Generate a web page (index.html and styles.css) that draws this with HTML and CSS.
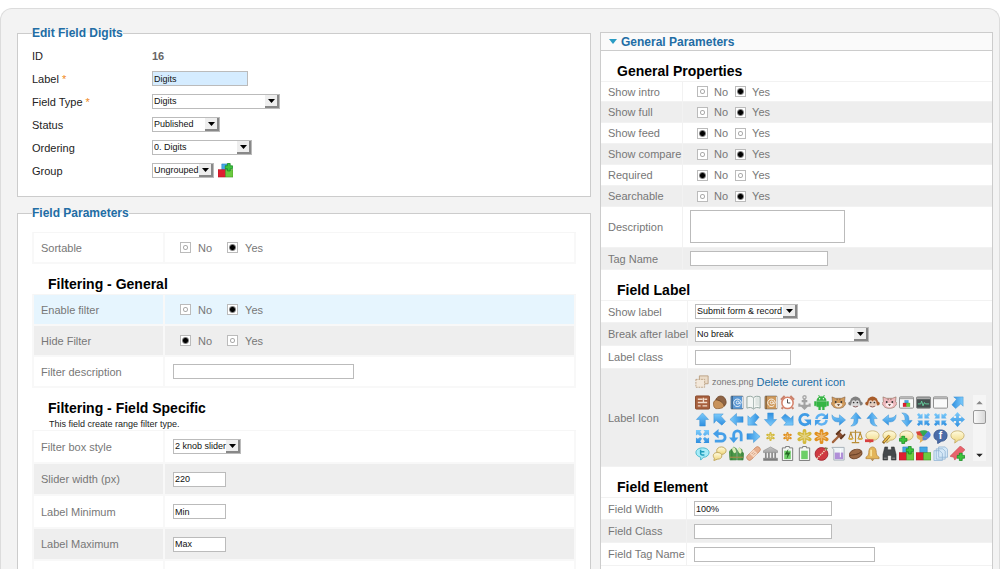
FILE: index.html
```html
<!DOCTYPE html>
<html lang="en">
<head>
    <meta charset="UTF-8">
    <meta name="viewport" content="width=device-width, initial-scale=1.0">
    <title>Edit Field Digits</title>
    <link rel="stylesheet" href="styles.css">
</head>
<body>
    <!-- shared icon shapes -->
    <svg class="sprite" aria-hidden="true">
        <defs>
            <linearGradient id="blue" x1="0" y1="0" x2="0" y2="1">
                <stop offset="0" stop-color="#7ccbfb"/>
                <stop offset="1" stop-color="#2f8fe0"/>
            </linearGradient>
            <linearGradient id="cream" x1="0" y1="0" x2="0" y2="1">
                <stop offset="0" stop-color="#fffbe0"/>
                <stop offset="1" stop-color="#efd67a"/>
            </linearGradient>
            <linearGradient id="metal" x1="0" y1="0" x2="0" y2="1">
                <stop offset="0" stop-color="#c4c4c4"/>
                <stop offset="1" stop-color="#777"/>
            </linearGradient>
        </defs>
        <symbol id="arrow" viewBox="0 0 16 16"><path d="M8 1l6.5 7H11v7H5V8H1.5z" fill="url(#blue)" stroke="#3a8fd2" stroke-width=".5"/></symbol>
        <symbol id="diagonal" viewBox="0 0 16 16"><path d="M2 2h10L9.500 4.500l5 5.500-4 4-6-5L2 12z" fill="url(#blue)" stroke="#3a8fd2" stroke-width=".5"/></symbol>
        <symbol id="curve" viewBox="0 0 16 16"><path d="M1 3c2 3 4 3.500 8 3.500V3l6.500 5.500L9 14v-3.500C4 11 1 9 1 3z" fill="url(#blue)" stroke="#3a8fd2" stroke-width=".5"/></symbol>
        <symbol id="circle-arrow" viewBox="0 0 16 16"><path d="M12.500 4.500A5.500 5.500 0 1 0 13 11" fill="none" stroke="#3f9ce6" stroke-width="3"/><path d="M7.500 8H15v6.500z" fill="#3f9ce6"/></symbol>
        <symbol id="refresh" viewBox="0 0 16 16"><path d="M2.500 7.500a5.500 5.500 0 0 1 9.500-3M13.500 8.500a5.500 5.500 0 0 1-9.500 3" fill="none" stroke="#5fb2f2" stroke-width="2.600"/><path d="M15 1v6.500H8.500zM1 15V8.500h6.500z" fill="#459fe8"/></symbol>
        <symbol id="undo" viewBox="0 0 16 16"><path d="M5 5h5a4 4 0 0 1 0 8H3" fill="none" stroke="#459fe8" stroke-width="3"/><path d="M7 0v10L1 5z" fill="#459fe8"/></symbol>
        <symbol id="outward" viewBox="0 0 16 16"><path d="M1 1h6L5.500 3l2 2.500-2 2L3 5.500 1 7zM15 1v6l-2-1.500-2.500 2-2-2L10.500 3 9 1zM1 15V9l2 1.500 2.500-2 2 2L5.500 13 7 15zM15 15H9l1.500-2-2-2.500 2-2 2.500 2L15 9z" fill="url(#blue)"/></symbol>
        <symbol id="inward" viewBox="0 0 16 16"><path d="M7 7H1.500L3 5 1 3l2-2 2 2 2-1.500zM9 7V1.500L11 3l2-2 2 2-2 2 1.500 2zM7 9v5.500L5 13l-2 2-2-2 2-2-1.500-2zM9 9h5.500L13 11l2 2-2 2-2-2-2 1.500z" fill="url(#blue)"/></symbol>
        <symbol id="move" viewBox="0 0 16 16"><path d="M8 0l3.500 4H9.500v2.500H12V4.500L16 8l-4 3.500V9.500H9.500V12h2L8 16l-3.500-4h2V9.500H4v2L0 8l4-3.500v2h2.500V4h-2z" fill="url(#blue)"/></symbol>
        <symbol id="asterisk" viewBox="0 0 16 16"><path d="M8 2v12M2.500 5l11 6M13.500 5l-11 6" stroke="currentColor" stroke-width="4" stroke-linecap="round"/><path d="M8 3v10M3.500 5.500l9 5M12.500 5.500l-9 5" stroke="#fff" stroke-opacity=".35" stroke-width="1.500"/></symbol>
        <symbol id="board" viewBox="0 0 16 16"><rect x=".5" y="1" width="15" height="14" rx="1" fill="#a8603e" stroke="#85482a"/><path d="M3 4.500h5M10 4.500h3M3 8h10M3 11.500h3M8 11.500h5M9 3v5" stroke="#f2dccb" stroke-width="1.400"/></symbol>
        <symbol id="acorn" viewBox="0 0 16 16"><path d="M2 7c-1 4 0 8 4 7.500 4 0 7-1 7-4L6 4z" fill="#c8935c" stroke="#8b5a2b" stroke-width=".8"/><path d="M4 5c2-5 8-5 10-1s1 6-1 8C13 8 9 6 4 5z" fill="#8e6344" stroke="#6c4426" stroke-width=".8"/></symbol>
        <symbol id="address-book" viewBox="0 0 16 16"><rect x="2" y="1" width="13" height="14" rx="1" fill="currentColor" stroke="#555" stroke-opacity=".5"/><path d="M3.500 1v14" stroke="#000" stroke-opacity=".3" stroke-width="1.500"/><path d="M14.500 2v12" stroke="#eee"/><path d="M12 11a4 4 0 1 1 1-3c0 2-2 2-2 0" fill="none" stroke="#fff" stroke-width=".9"/><circle cx="9.300" cy="8" r="1.600" fill="none" stroke="#fff" stroke-width=".9"/></symbol>
        <symbol id="open-book" viewBox="0 0 16 16"><path d="M1 2c3-1 5-1 7 1 2-2 4-2 7-1v12c-3-1-5-1-7 1-2-2-4-2-7-1z" fill="#f3f6f4" stroke="#8fa29d"/><path d="M8 3v12" stroke="#aab8b4"/><path d="M10 3c1-1 3-1 4 0v9c-1-1-3-1-4 0z" fill="#dfe6e3"/></symbol>
        <symbol id="clock" viewBox="0 0 16 16"><path d="M1 5l4-4M15 5l-4-4M3 13l-1 2M13 13l1 2" stroke="#c9826c" stroke-width="2.200"/><circle cx="8" cy="8.500" r="6" fill="#fff" stroke="#d5826a" stroke-width="1.600"/><path d="M8 4.500v4h3" fill="none" stroke="#444"/></symbol>
        <symbol id="anchor" viewBox="0 0 16 16"><circle cx="8" cy="2.500" r="1.700" fill="none" stroke="#aaa" stroke-width="1.500"/><path d="M8 4v10M5 6.500h6M2.500 9v2.500h11V9M5 11.500l3 3 3-3" fill="none" stroke="#a2a2a2" stroke-width="2.200"/></symbol>
        <symbol id="android" viewBox="0 0 16 16"><path d="M3 6a5 4.500 0 0 1 10 0zM3 7h10v5.500H3zM.500 7h2v4.500h-2zM13.500 7h2v4.500h-2zM5 12h2v4H5zM9 12h2v4H9z" fill="#35b544" stroke="#35b544" stroke-width=".5"/><path d="M5 0l1 2.500M11 0l-1 2.500" stroke="#35b544"/><circle cx="6" cy="4" r=".7" fill="#fff"/><circle cx="10" cy="4" r=".7" fill="#fff"/></symbol>
        <symbol id="cat" viewBox="0 0 16 16"><path d="M1 2l4 1.500h6L15 2l-.5 5L16 9l-2 3c-2 3-10 3-12 0L0 9l1.500-2z" fill="currentColor" stroke="#6b4a30" stroke-opacity=".6" stroke-width=".8"/><path d="M4 10c1-2 7-2 8 0 0 4-8 4-8 0z" fill="#fff" fill-opacity=".75"/><circle cx="5" cy="7.500" r="1" fill="#333"/><circle cx="11" cy="7.500" r="1" fill="#333"/><path d="M7 10h2l-1 1.500zM6.500 4v1.500M9.500 4v1.500" fill="#444" stroke="#5a3d2a" stroke-opacity=".7"/></symbol>
        <symbol id="monkey" viewBox="0 0 16 16"><circle cx="2.500" cy="9" r="2.200" fill="currentColor"/><circle cx="13.500" cy="9" r="2.200" fill="currentColor"/><circle cx="8" cy="7.500" r="5.800" fill="currentColor"/><path d="M4 7c1-2 3-2 4 0 1-2 3-2 4 0 0 2 1 3 1 4-1 5-9 5-10 0 0-1 1-2 1-4z" fill="#fff" fill-opacity=".7"/><circle cx="6" cy="8" r=".9" fill="#333"/><circle cx="10" cy="8" r=".9" fill="#333"/><path d="M5.500 12q2.500 1.500 5 0" fill="none" stroke="#855"/></symbol>
        <symbol id="window" viewBox="0 0 16 16"><rect x=".5" y="2" width="15" height="12" rx="1" fill="#fafafa" stroke="#888"/><path d="M1 3.500h14" stroke="#aaa" stroke-width="2"/></symbol>
        <symbol id="monitor" viewBox="0 0 16 16"><rect x=".5" y="2" width="15" height="12" rx="1" fill="#445050" stroke="#888"/><path d="M1 3.500h14" stroke="#aaa" stroke-width="2"/><path d="M2 9.500h3l1-3 1.500 5L9 8l1 1.500h4" fill="none" stroke="#65d2a0"/></symbol>
        <symbol id="gavel" viewBox="0 0 16 16"><path d="M2 14l7-7" stroke="#a2633c" stroke-width="2.400" stroke-linecap="round"/><path d="M6.500 3.500l6 6" stroke="#8c4f31" stroke-width="4.500"/><path d="M5.500 6l5-5M10 10.500l5-5" stroke="#5f3820" stroke-width="1.800"/></symbol>
        <symbol id="scales" viewBox="0 0 16 16"><path d="M8 1v13M4 14.500h8M2 3.500h12M3 4l-2 6M3 4l2 6M13 4l-2 6M13 4l2 6" fill="none" stroke="#b98d35" stroke-width="1.200"/><path d="M0 9.500h6c0 3-6 3-6 0zM10 9.500h6c0 3-6 3-6 0z" fill="#d9b04c"/></symbol>
        <symbol id="balloon" viewBox="0 0 16 16"><path d="M8 2c4 0 7 2 7 5s-3 5-6 5l-4 3 .500-3.500C3 11 1 9.500 1 7c0-3 3-5 7-5z" fill="url(#cream)" stroke="#bfa55c" stroke-width=".8"/></symbol>
        <symbol id="plus"><path d="M3 .500h3v2.500h2.500v3H6v2.500H3V6H.500V3H3z" fill="#3cc43c" stroke="#168a20" stroke-width=".8"/></symbol>
        <symbol id="buzz" viewBox="0 0 16 16"><path d="M0 3l5-1 4 6H2z" fill="#d8463b"/><path d="M4 2c3-1 7-1 9 1L8 9z" fill="#34a853"/><path d="M13 2c4 3 3 6 0 8L7 9z" fill="#4e7fe0"/><path d="M1 6l7 2 5 2c-2 2-4 2-5 2l-4 3 .500-3.500C2 11 0 9 1 6z" fill="#e0b05a"/><path d="M7 8l6 2c-2 2-4 2-6 2z" fill="#5b82d0"/></symbol>
        <symbol id="facebook" viewBox="0 0 16 16"><path d="M8 1c4 0 7 2 7 6s-3 6-6 6l-4 2.500V12C3 12 1 10 1 7c0-4 3-6 7-6z" fill="#4b6ca9" stroke="#3a598f"/></symbol>
        <symbol id="twitter" viewBox="0 0 16 16"><path d="M8 2c4 0 7 2 7 5s-3 5-6 5l-3 3v-3C3 11 1 9.500 1 7c0-3 3-5 7-5z" fill="#a8ecf8" stroke="#43b5cc"/><path d="M6 4v4q0 1.500 1.500 1.500H10M6 6h4" fill="none" stroke="#1e9dbc" stroke-width="1.600"/></symbol>
        <symbol id="balloons" viewBox="0 0 16 16"><ellipse cx="10" cy="5" rx="5" ry="4" fill="url(#cream)" stroke="#bfa55c"/><path d="M5.500 7c3 0 5 1 5 3.500S8.500 14 6 14l-4 1.500.500-2.500C.500 11 1 7 5.500 7z" fill="url(#cream)" stroke="#bfa55c"/></symbol>
        <symbol id="bamboo" viewBox="0 0 16 16"><path d="M0 6l3-3v12H1zM3 4l2-3 3 2v12H3zM9 5l2-3 3 2v11H9zM14 6l2 2-1 7h-1z" fill="#4d9a49" stroke="#35753a" stroke-width=".5"/><ellipse cx="5.500" cy="4.500" rx="1.800" ry="3.200" fill="#dcedb9" transform="rotate(-20 5.500 4.500)"/><ellipse cx="11.500" cy="5" rx="1.800" ry="3.200" fill="#dcedb9" transform="rotate(-20 11.500 5)"/><path d="M1 12h14" stroke="#a98a4a" stroke-width="1.200"/></symbol>
        <symbol id="bandage" viewBox="0 0 16 16"><g transform="rotate(-45 8 8)"><rect x="-1" y="5" width="18" height="6" rx="3" fill="#e7ad8b" stroke="#c88a66" stroke-width=".8"/><rect x="5" y="5" width="6" height="6" fill="#f7d8c2"/><path d="M6.500 7h1M8.500 9h1M8.500 7h1M6.500 9h1" stroke="#c07a52"/></g></symbol>
        <symbol id="bank" viewBox="0 0 16 16"><path d="M8 1l7.500 4v2H.500V5zM.500 13h15v2.500H.500z" fill="url(#metal)" stroke="#777" stroke-width=".5"/><path d="M3 7v6M6.300 7v6M9.700 7v6M13 7v6" stroke="#888" stroke-width="1.800"/></symbol>
        <symbol id="battery" viewBox="0 0 16 16"><path d="M6 .500h4V2h3.500v13.500h-11V2H6z" fill="#f4f7f4" stroke="#777"/><path d="M4.500 5h7v9h-7z" fill="currentColor"/></symbol>
        <symbol id="ball" viewBox="0 0 16 16"><circle cx="8" cy="8.500" r="6.800" fill="#cf3a42" stroke="#a32830"/><path d="M3 13.500l10-10" stroke="#f0dcc0" stroke-width="1.500" stroke-dasharray="1.500 1"/><path d="M11 1l4 1-2 3z" fill="#7a7a4a"/></symbol>
        <symbol id="beaker" viewBox="0 0 16 16"><path d="M1 1.500h13V15H3V4z" fill="#eef4f7" stroke="#a5b0b8"/><path d="M4 7h9v7H4z" fill="#b08fd8"/><path d="M10 3v9" stroke="#fff"/></symbol>
        <symbol id="bean" viewBox="0 0 16 16"><ellipse cx="8" cy="8.500" rx="7" ry="4.800" transform="rotate(-20 8 8)" fill="#9c6945" stroke="#74482b"/><path d="M2 10c4-1 8 0 12-4" fill="none" stroke="#5d371f"/></symbol>
        <symbol id="bell" viewBox="0 0 16 16"><path d="M8 1c3 0 4 3 4 6 0 2 1 4 3 5v1.500H1V12c2-1 3-3 3-5 0-3 1-6 4-6z" fill="#e3b559" stroke="#b5853d" stroke-width=".8"/><path d="M6 14h4l-2 2z" fill="#a8742a"/><path d="M6.500 4v7" stroke="#fff0b0" stroke-width="1.500"/></symbol>
        <symbol id="binoculars" viewBox="0 0 16 16"><path d="M3 1h3v3h4V1h3l2 8v6h-5v-5H6v5H1V9z" fill="#44484c" stroke="#222" stroke-width=".5"/><path d="M2 13h3M11 13h3" stroke="#999"/></symbol>
        <symbol id="blocks" viewBox="0 0 16 16"><path d="M4 1h8v7H4z" fill="#46a8e6" stroke="#2273b6" stroke-width=".5"/><path d="M0 7h8v8H0z" fill="#de1f30" stroke="#a81420" stroke-width=".5"/><path d="M8 7h8v8H8z" fill="#6ccb40" stroke="#388218" stroke-width=".5"/></symbol>
        <symbol id="documents" viewBox="0 0 16 16"><path d="M6 1h7l2.500 2.500V12H6zM3.500 3h7L13 5.500V14H3.500zM1 5h6l3 3v7.500H1z" fill="#d5e8f7" stroke="#8fb3d3" stroke-width=".8"/></symbol>
        <symbol id="bookmark" viewBox="0 0 16 16"><path d="M11 0l5 4L5 15l-1-3-4-1z" fill="#e8636c" stroke="#c4434f" stroke-width=".6"/></symbol>
        <symbol id="zones" viewBox="0 0 16 16"><path d="M5 1h10v9H5z" fill="#eadbc8" stroke="#b79c7d"/><path d="M1 5h10v9H1z" fill="#f3e8da" stroke="#b79c7d" stroke-dasharray="2 1"/></symbol>
    </svg>

    <form class="panel">
        <div class="column">
            <fieldset>
                <legend>Edit Field Digits</legend>
                <table class="details">
                    <tr><th>ID</th><td><strong class="field-id">16</strong></td></tr>
                    <tr><th><label for="label">Label <span class="star">*</span></label></th><td><input type="text" id="label" class="w-96 highlight" value="Digits"></td></tr>
                    <tr><th><label for="type">Field Type <span class="star">*</span></label></th><td><select id="type" class="w-128"><option>Digits</option></select></td></tr>
                    <tr><th><label for="status">Status</label></th><td><select id="status" class="w-68"><option>Published</option></select></td></tr>
                    <tr><th><label for="ordering">Ordering</label></th><td><select id="ordering" class="w-100"><option>0. Digits</option></select></td></tr>
                    <tr>
                        <th><label for="group">Group</label></th>
                        <td class="group-cell">
                            <select id="group" class="w-62"><option>Ungrouped</option></select>
                            <button type="button" class="icon" aria-label="Add group"><svg viewBox="0 0 16 16"><use href="#blocks"/><use href="#plus" x="7"/></svg></button>
                        </td>
                    </tr>
                </table>
            </fieldset>

            <fieldset>
                <legend>Field Parameters</legend>
                <table class="params first">
                    <tr>
                        <th>Sortable</th>
                        <td><div class="choices"><label><input type="radio" name="sortable">No</label><label><input type="radio" name="sortable" checked>Yes</label></div></td>
                    </tr>
                </table>
                <h3>Filtering - General</h3>
                <table class="params">
                    <tr class="active">
                        <th>Enable filter</th>
                        <td><div class="choices"><label><input type="radio" name="enable">No</label><label><input type="radio" name="enable" checked>Yes</label></div></td>
                    </tr>
                    <tr class="alt">
                        <th>Hide Filter</th>
                        <td><div class="choices"><label><input type="radio" name="hide" checked>No</label><label><input type="radio" name="hide">Yes</label></div></td>
                    </tr>
                    <tr><th><label for="filter-desc">Filter description</label></th><td><input type="text" id="filter-desc" class="w-181"></td></tr>
                </table>
                <h3>Filtering - Field Specific</h3>
                <p class="note">This field create range filter type.</p>
                <table class="params tall">
                    <tr><th><label for="box-style">Filter box style</label></th><td><select id="box-style" class="w-68"><option>2 knob slider</option></select></td></tr>
                    <tr class="alt"><th><label for="slider-width">Slider width (px)</label></th><td><input type="text" id="slider-width" class="w-53" value="220"></td></tr>
                    <tr><th><label for="min">Label Minimum</label></th><td><input type="text" id="min" class="w-53" value="Min"></td></tr>
                    <tr class="alt"><th><label for="max">Label Maximum</label></th><td><input type="text" id="max" class="w-53" value="Max"></td></tr>
                    <tr><th></th><td></td></tr>
                </table>
            </fieldset>
        </div>

        <div class="general">
            <h2>General Parameters</h2>
            <h3>General Properties</h3>
            <table class="props properties">
                <tr>
                    <th>Show intro</th>
                    <td><div class="choices"><label><input type="radio" name="intro">No</label><label><input type="radio" name="intro" checked>Yes</label></div></td>
                </tr>
                <tr class="alt">
                    <th>Show full</th>
                    <td><div class="choices"><label><input type="radio" name="full">No</label><label><input type="radio" name="full" checked>Yes</label></div></td>
                </tr>
                <tr>
                    <th>Show feed</th>
                    <td><div class="choices"><label><input type="radio" name="feed" checked>No</label><label><input type="radio" name="feed">Yes</label></div></td>
                </tr>
                <tr class="alt">
                    <th>Show compare</th>
                    <td><div class="choices"><label><input type="radio" name="compare">No</label><label><input type="radio" name="compare" checked>Yes</label></div></td>
                </tr>
                <tr>
                    <th>Required</th>
                    <td><div class="choices"><label><input type="radio" name="required" checked>No</label><label><input type="radio" name="required">Yes</label></div></td>
                </tr>
                <tr class="alt">
                    <th>Searchable</th>
                    <td><div class="choices"><label><input type="radio" name="searchable">No</label><label><input type="radio" name="searchable" checked>Yes</label></div></td>
                </tr>
                <tr><th><label for="description">Description</label></th><td><textarea id="description"></textarea></td></tr>
                <tr class="alt"><th><label for="tag-name">Tag Name</label></th><td><input type="text" id="tag-name" class="w-138"></td></tr>
            </table>

            <h3>Field Label</h3>
            <table class="props wide">
                <tr><th><label for="show-label">Show label</label></th><td><select id="show-label" class="w-103"><option>Submit form &amp; record</option></select></td></tr>
                <tr class="alt"><th><label for="break">Break after label</label></th><td><select id="break" class="w-174"><option>No break</option></select></td></tr>
                <tr><th><label for="label-class">Label class</label></th><td><input type="text" id="label-class" class="w-96"></td></tr>
                <tr class="alt">
                    <th>Label Icon</th>
                    <td>
                        <div class="current-icon">
                            <svg viewBox="0 0 16 16"><use href="#zones"/></svg>
                            <span>zones.png</span>
                            <a href="#">Delete curent icon</a>
                        </div>
                        <div class="picker">
                            <div class="icons">
                                <button type="button" class="icon" aria-label="Board"><svg><use href="#board"/></svg></button>
                                <button type="button" class="icon" aria-label="Acorn"><svg><use href="#acorn"/></svg></button>
                                <button type="button" class="icon sky" aria-label="Blue address book"><svg><use href="#address-book"/></svg></button>
                                <button type="button" class="icon" aria-label="Open book"><svg><use href="#open-book"/></svg></button>
                                <button type="button" class="icon tan" aria-label="Address book"><svg><use href="#address-book"/></svg></button>
                                <button type="button" class="icon" aria-label="Alarm clock"><svg><use href="#clock"/></svg></button>
                                <button type="button" class="icon" aria-label="Anchor"><svg><use href="#anchor"/></svg></button>
                                <button type="button" class="icon" aria-label="Android"><svg><use href="#android"/></svg></button>
                                <button type="button" class="icon tan" aria-label="Tiger"><svg><use href="#cat"/></svg></button>
                                <button type="button" class="icon grey" aria-label="Grey monkey"><svg><use href="#monkey"/></svg></button>
                                <button type="button" class="icon brown" aria-label="Monkey"><svg><use href="#monkey"/></svg></button>
                                <button type="button" class="icon pink" aria-label="Cat"><svg><use href="#cat"/></svg></button>
                                <button type="button" class="icon" aria-label="Window blocks"><svg viewBox="0 0 16 16"><use href="#window"/><use href="#blocks" x="4" y="5" width="8" height="8"/></svg></button>
                                <button type="button" class="icon" aria-label="Monitor"><svg><use href="#monitor"/></svg></button>
                                <button type="button" class="icon" aria-label="Window"><svg><use href="#window"/></svg></button>
                                <button type="button" class="icon r90" aria-label="Arrow up right"><svg><use href="#diagonal"/></svg></button>

                                <button type="button" class="icon" aria-label="Arrow up"><svg><use href="#arrow"/></svg></button>
                                <button type="button" class="icon" aria-label="Arrow up left"><svg><use href="#diagonal"/></svg></button>
                                <button type="button" class="icon r270" aria-label="Arrow left"><svg><use href="#arrow"/></svg></button>
                                <button type="button" class="icon r270" aria-label="Arrow down left"><svg><use href="#diagonal"/></svg></button>
                                <button type="button" class="icon r180" aria-label="Arrow down"><svg><use href="#arrow"/></svg></button>
                                <button type="button" class="icon r180" aria-label="Arrow down right"><svg><use href="#diagonal"/></svg></button>
                                <button type="button" class="icon" aria-label="Circle arrow"><svg><use href="#circle-arrow"/></svg></button>
                                <button type="button" class="icon" aria-label="Refresh"><svg><use href="#refresh"/></svg></button>
                                <button type="button" class="icon" aria-label="Curve right"><svg><use href="#curve"/></svg></button>
                                <button type="button" class="icon r270" aria-label="Curve up"><svg><use href="#curve"/></svg></button>
                                <button type="button" class="icon mirror270" aria-label="Curve up left"><svg><use href="#curve"/></svg></button>
                                <button type="button" class="icon mirror" aria-label="Curve left"><svg><use href="#curve"/></svg></button>
                                <button type="button" class="icon mirror90" aria-label="Curve down"><svg><use href="#curve"/></svg></button>
                                <button type="button" class="icon" aria-label="Arrows in"><svg><use href="#inward"/></svg></button>
                                <button type="button" class="icon" aria-label="Arrows inward"><svg><use href="#inward"/></svg></button>
                                <button type="button" class="icon" aria-label="Move"><svg><use href="#move"/></svg></button>

                                <button type="button" class="icon" aria-label="Arrows out"><svg><use href="#outward"/></svg></button>
                                <button type="button" class="icon" aria-label="Return"><svg><use href="#undo"/></svg></button>
                                <button type="button" class="icon r270" aria-label="Turn down"><svg><use href="#undo"/></svg></button>
                                <button type="button" class="icon r90" aria-label="Arrow right"><svg><use href="#arrow"/></svg></button>
                                <button type="button" class="icon yellow small" aria-label="Small yellow asterisk"><svg><use href="#asterisk"/></svg></button>
                                <button type="button" class="icon orange small" aria-label="Small orange asterisk"><svg><use href="#asterisk"/></svg></button>
                                <button type="button" class="icon yellow" aria-label="Yellow asterisk"><svg><use href="#asterisk"/></svg></button>
                                <button type="button" class="icon orange" aria-label="Orange asterisk"><svg><use href="#asterisk"/></svg></button>
                                <button type="button" class="icon" aria-label="Gavel"><svg><use href="#gavel"/></svg></button>
                                <button type="button" class="icon" aria-label="Scales"><svg><use href="#scales"/></svg></button>
                                <button type="button" class="icon" aria-label="Balloon minus"><svg viewBox="0 0 16 16"><use href="#balloon"/><path d="M0 11h9v3H0z" fill="#d84040"/></svg></button>
                                <button type="button" class="icon" aria-label="Balloon pencil"><svg viewBox="0 0 16 16"><use href="#balloon"/><path d="M1 15l7-8" stroke="#8b6325" stroke-width="3"/><path d="M2 14l6-7" stroke="#f3c64c" stroke-width="1.5"/></svg></button>
                                <button type="button" class="icon" aria-label="Balloon plus"><svg viewBox="0 0 16 16"><use href="#balloon"/><use href="#plus" y="7"/></svg></button>
                                <button type="button" class="icon" aria-label="Buzz"><svg><use href="#buzz"/></svg></button>
                                <button type="button" class="icon" aria-label="Facebook balloon"><svg viewBox="0 0 16 16"><use href="#facebook"/><text x="8" y="11" class="letter">f</text></svg></button>
                                <button type="button" class="icon" aria-label="Balloon"><svg><use href="#balloon"/></svg></button>

                                <button type="button" class="icon" aria-label="Twitter balloon"><svg><use href="#twitter"/></svg></button>
                                <button type="button" class="icon" aria-label="Balloons"><svg><use href="#balloons"/></svg></button>
                                <button type="button" class="icon" aria-label="Bamboo"><svg><use href="#bamboo"/></svg></button>
                                <button type="button" class="icon" aria-label="Bandage"><svg><use href="#bandage"/></svg></button>
                                <button type="button" class="icon" aria-label="Bank"><svg><use href="#bank"/></svg></button>
                                <button type="button" class="icon green" aria-label="Battery charging"><svg viewBox="0 0 16 16"><use href="#battery"/><path d="M9 3L5 9h3l-1 5 4-7H8z" fill="#226622"/></svg></button>
                                <button type="button" class="icon green" aria-label="Battery"><svg><use href="#battery"/></svg></button>
                                <button type="button" class="icon" aria-label="Ball"><svg><use href="#ball"/></svg></button>
                                <button type="button" class="icon" aria-label="Beaker"><svg><use href="#beaker"/></svg></button>
                                <button type="button" class="icon" aria-label="Bean"><svg><use href="#bean"/></svg></button>
                                <button type="button" class="icon" aria-label="Bell"><svg><use href="#bell"/></svg></button>
                                <button type="button" class="icon" aria-label="Binoculars"><svg><use href="#binoculars"/></svg></button>
                                <button type="button" class="icon" aria-label="Blocks plus"><svg viewBox="0 0 16 16"><use href="#blocks"/><use href="#plus" x="7"/></svg></button>
                                <button type="button" class="icon" aria-label="Blocks"><svg><use href="#blocks"/></svg></button>
                                <button type="button" class="icon" aria-label="Documents"><svg><use href="#documents"/></svg></button>
                                <button type="button" class="icon" aria-label="Bookmark plus"><svg viewBox="0 0 16 16"><use href="#bookmark"/><use href="#plus" x="7" y="7"/></svg></button>
                            </div>
                            <div class="scroller" aria-hidden="true">
                                <svg viewBox="0 0 12 8"><path d="M3 6l3-3 3 3z" fill="#888"/></svg>
                                <div class="thumb"></div>
                                <svg viewBox="0 0 12 8"><path d="M3 2l3 3 3-3z" fill="#222"/></svg>
                            </div>
                        </div>
                    </td>
                </tr>
            </table>

            <h3>Field Element</h3>
            <table class="props element">
                <tr><th><label for="field-width">Field Width</label></th><td><input type="text" id="field-width" class="w-138" value="100%"></td></tr>
                <tr class="alt"><th><label for="field-class">Field Class</label></th><td><input type="text" id="field-class" class="w-138"></td></tr>
                <tr><th><label for="field-tag">Field Tag Name</label></th><td><input type="text" id="field-tag" class="w-181"></td></tr>
            </table>
        </div>
    </form>
</body>
</html>
```
FILE: styles.css
```css
* {
    box-sizing: border-box;
}

body {
    margin: 0;
    padding-top: 8px;
    font-family: "Liberation Sans", Arial, sans-serif;
    font-size: 11px;
    color: #777;
    background: #fff;
}

.sprite {
    position: absolute;
    width: 0;
    height: 0;
}

.panel {
    display: grid;
    grid-template-columns: minmax(0, 574fr) minmax(0, 393fr);
    gap: 9px;
    min-height: calc(100vh - 8px);
    padding: 16px 6px 0 16px;
    background: #f3f3f3;
    border: 1px solid #dcdcdc;
    border-bottom: none;
    border-radius: 12px 12px 0 0;
}

.column {
    display: flex;
    flex-direction: column;
    gap: 8px;
}

fieldset {
    min-width: 0;
    margin: 0;
    padding: 0 14px 14px;
    background: #fff;
    border: 1px solid #ccc;
}

legend {
    padding: 0;
    font-size: 12px;
    line-height: 16px;
    font-weight: bold;
    color: #226da5;
}

h2 {
    display: flex;
    align-items: center;
    gap: 4px;
    height: 18px;
    margin: 0;
    padding-left: 8px;
    font-size: 12px;
    color: #226da5;
    background: #fafafa;
    border-bottom: 1px solid #ccc;
}

h2::before {
    content: "";
    border: 4px solid transparent;
    border-top: 5px solid #2a9cc4;
    border-bottom: none;
}

h3 {
    margin: 0;
    padding: 10px 16px 0;
    font-size: 14px;
    line-height: 20px;
    color: #000;
}

.note {
    margin: 0;
    padding-left: 17px;
    font-size: 9px;
    line-height: 12px;
    color: #222;
}

table {
    width: 100%;
    table-layout: fixed;
    border-spacing: 0;
}

th {
    text-align: left;
    font-weight: normal;
    white-space: nowrap;
}

td,
th {
    padding-top: 0;
    padding-bottom: 0;
    vertical-align: middle;
}

/* field details */
.details {
    margin-top: 3px;
}

.details th,
.details td {
    height: 23px;
    padding-left: 0;
    color: #222;
}

.details th {
    width: 120px;
}

.details .field-id {
    color: #666;
}

.star {
    color: #f08a24;
}

.group-cell {
    display: flex;
    align-items: center;
    gap: 4px;
}

/* parameter tables, left side */
.params {
    border-top: 1px solid #f6f6f6;
    border-left: 2px solid #f8f8f8;
}

.params.first {
    margin-top: 11px;
}

.params th,
.params td {
    height: 31px;
    padding-left: 8px;
    border-right: 2px solid #f8f8f8;
    border-bottom: 2px solid #f8f8f8;
}

.params th {
    width: 131px;
    padding-left: 7px;
}

.params.tall tr:nth-child(odd) td {
    height: 33px;
}

.params.tall .alt td {
    height: 32px;
}

.alt {
    background: #eee;
}

.active {
    background: #e6f5fe;
}

/* general parameters, right side */
.general {
    margin-top: 7px;
    background: #fff;
    border: 1px solid #ccc;
    border-bottom: none;
}

.props th,
.props td {
    height: 21px;
    padding-left: 7px;
    border-bottom: 1px solid #f2f2f2;
}

.props th {
    width: 82px;
    padding-right: 0;
    border-right: 1px solid #f2f2f2;
}

.props tr:first-child th,
.props tr:first-child td {
    border-top: 1px solid #f2f2f2;
}

.props.properties tr:last-child td {
    height: 22px;
}

.wide th,
.wide td,
.element th,
.element td {
    height: 23px;
}

.wide th {
    width: 87px;
}

.element th {
    width: 86px;
}

/* form controls */
input[type="text"],
select,
textarea {
    display: block;
    max-width: 100%;
    height: 15px;
    margin: 0;
    padding: 0 1px;
    font-family: inherit;
    font-size: 9px;
    line-height: 13px;
    color: #111;
    background: #fff;
    border: 1px solid #bbb;
    border-radius: 0;
}

select {
    appearance: none;
    background: #fff url("data:image/svg+xml,%3Csvg xmlns='http://www.w3.org/2000/svg' width='14' height='13'%3E%3Cpath fill='%23eee' d='M0 0h14v13H0z'/%3E%3Cpath stroke='%23888' stroke-width='2' fill='none' d='M0 12h13V0'/%3E%3Cpath d='M3 4h7l-3.500 4z'/%3E%3C/svg%3E") no-repeat right center;
}

textarea {
    width: 155px;
    height: 33px;
    margin: 3px 0 4px;
    resize: none;
}

input.highlight {
    background: #d5ecff;
}

.w-53 { width: 53px; }
.w-62 { width: 62px; }
.w-68 { width: 68px; }
.w-96 { width: 96px; }
.w-100 { width: 100px; }
.w-103 { width: 103px; }
.w-128 { width: 128px; }
.w-138 { width: 138px; }
.w-174 { width: 174px; }
.w-181 { width: 181px; }

.choices {
    display: flex;
    gap: 15px;
    padding-left: 7px;
}

.choices label {
    display: flex;
    align-items: center;
    gap: 7px;
}

.props .choices {
    gap: 7px;
}

.props .choices label {
    gap: 6px;
}

input[type="radio"] {
    appearance: none;
    width: 11px;
    height: 11px;
    margin: 0;
    background: #fff radial-gradient(circle, #fff 1px, #aaa 2px, #aaa 2px, #fff 3px);
    border: 1px solid #bbb;
}

input[type="radio"]:checked {
    background: #fff radial-gradient(circle, #000 2px, #fff 4px);
}

/* icon picker */
.icon {
    display: block;
    width: 15px;
    height: 15px;
    padding: 0;
    background: none;
    border: none;
    cursor: pointer;
}

.icon svg {
    display: block;
    width: 100%;
    height: 100%;
}

.icon.small {
    padding: 3px;
}

.letter {
    font-size: 11px;
    font-weight: bold;
    text-anchor: middle;
    fill: #fff;
}

.r90 svg { transform: rotate(90deg); }
.r180 svg { transform: rotate(180deg); }
.r270 svg { transform: rotate(270deg); }
.mirror svg { transform: scaleX(-1); }
.mirror90 svg { transform: rotate(90deg) scaleY(-1); }
.mirror270 svg { transform: rotate(270deg) scaleY(-1); }

.sky { color: #5b98d4; }
.tan { color: #cf9a5c; }
.grey { color: #808080; }
.brown { color: #a85c2a; }
.pink { color: #eeb9bd; }
.yellow { color: #d3b93c; }
.orange { color: #e0901f; }
.green { color: #6ccf66; }

.current-icon {
    display: flex;
    align-items: center;
    gap: 3px;
    height: 15px;
    margin-bottom: 5px;
    font-size: 9px;
}

.current-icon svg {
    width: 14px;
    height: 14px;
}

.current-icon a {
    font-size: 11px;
    color: #226da5;
    text-decoration: none;
}

.wide tr:last-child td {
    height: 98px;
}

.picker {
    display: flex;
    gap: 8px;
}

.icons {
    display: grid;
    grid-template-columns: repeat(16, 15px);
    gap: 2px;
}

.scroller {
    display: flex;
    flex-direction: column;
    width: 13px;
    background: #f5f5f5;
}

.scroller svg {
    height: 10px;
    margin-top: 2px;
}

.scroller .thumb {
    height: 14px;
    margin: 3px 0 auto;
    background: linear-gradient(to right, #fafafa, #d8d8d8);
    border: 1px solid #999;
    border-radius: 2px;
}
```
